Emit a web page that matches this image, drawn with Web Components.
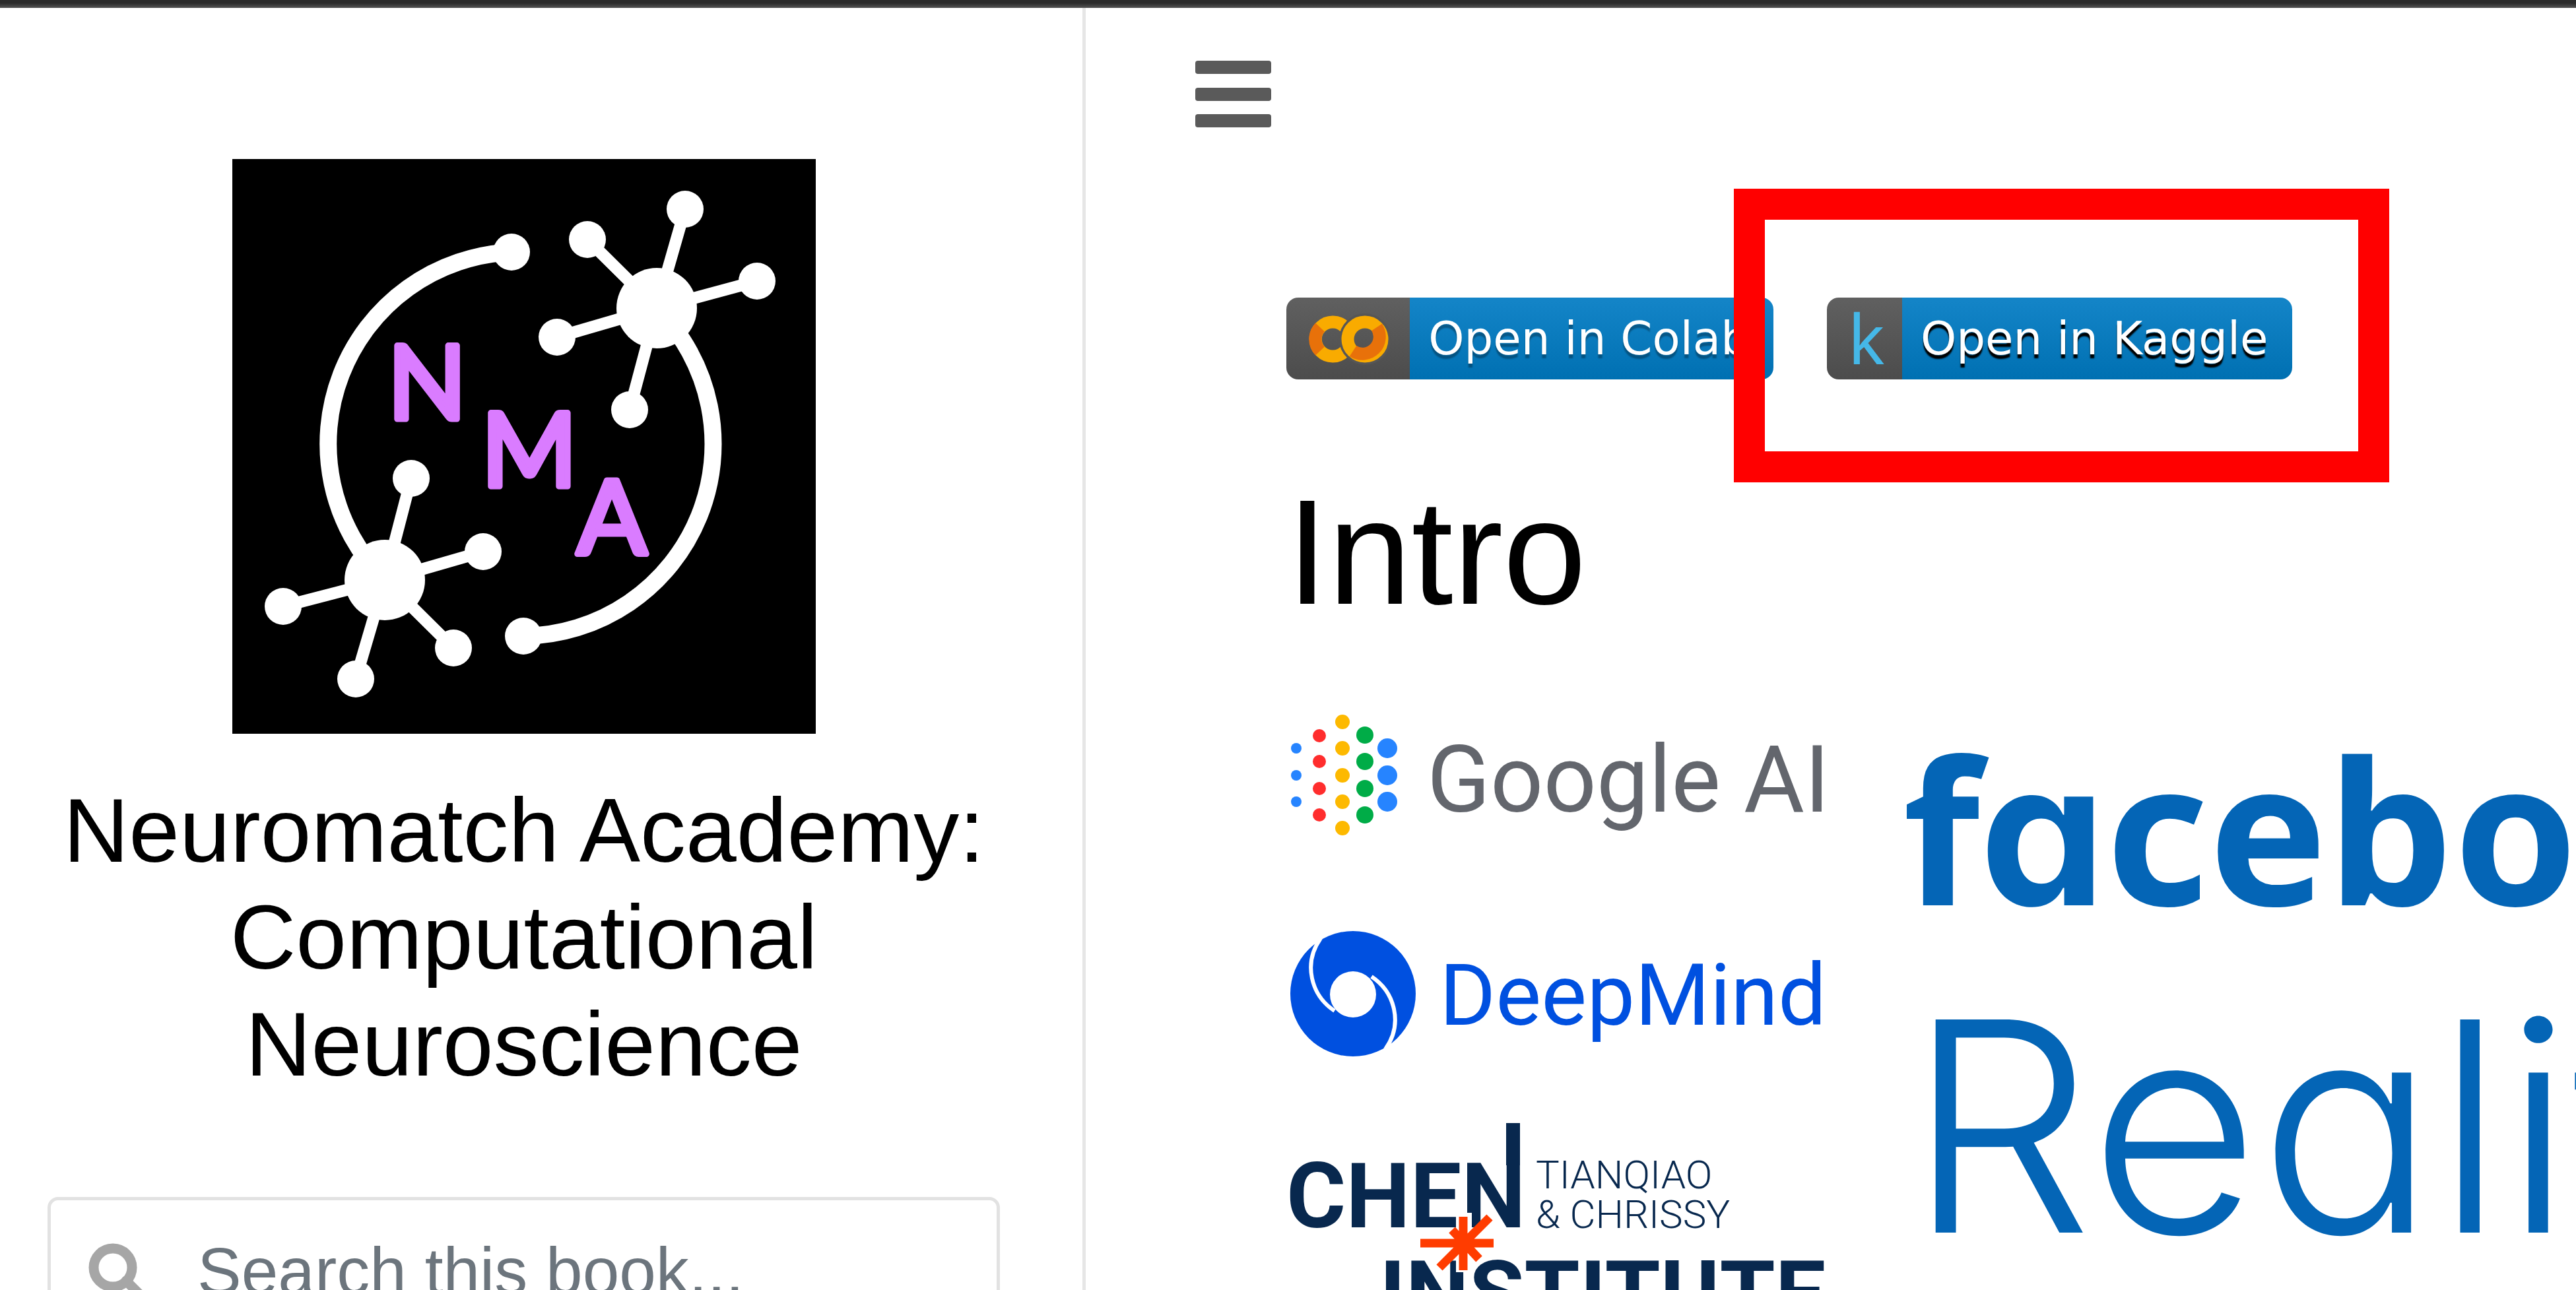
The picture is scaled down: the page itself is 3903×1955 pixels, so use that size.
<!DOCTYPE html>
<html lang="en">
<head>
<meta charset="utf-8">
<title>Intro — Neuromatch Academy: Computational Neuroscience</title>
<style>
  body {
    margin: 0;
    background: #fff;
    color: #000;
    font-family: "Liberation Sans", Arial, sans-serif;
  }
</style>
</head>
<body>
<book-page>
  <book-sidebar slot="sidebar">Neuromatch Academy: Computational Neuroscience</book-sidebar>
  <menu-toggle></menu-toggle>
  <book-article heading="Intro">
    <launch-badge slot="badges" href="#colab">
      <svg slot="icon" width="187" height="124" viewBox="1949 451 187 124" fill="none" stroke-width="19" aria-hidden="true">
        <path stroke="#f9ab00" d="M2038 496A26 26 0 1 0 2038 532"/>
        <path stroke="#e8710a" d="M2000 496A26 26 0 0 0 2000 532"/>
        <circle cx="2068" cy="514" r="36" stroke="#565656" stroke-width="6"/>
        <circle cx="2068" cy="514" r="26" stroke="#f9ab00"/>
        <path stroke="#e8710a" d="M2086 496A26 26 0 0 1 2050 532"/>
      </svg>
      Open in Colab
    </launch-badge>
    <launch-badge slot="badges" href="#kaggle" highlight>
      <svg slot="icon" width="114" height="124" viewBox="0 0 114 124" aria-hidden="true">
        <text x="32" y="101" font-family="Noto Sans, sans-serif" font-size="104" fill="#45b8e8">k</text>
      </svg>
      Open in Kaggle
    </launch-badge>
    <partner-logos></partner-logos>
  </book-article>
</book-page>

<script>
class BookPage extends HTMLElement {
  constructor() {
    super();
    this.attachShadow({ mode: 'open' }).innerHTML = `
      <style>
        :host {
          display: flex;
          flex-direction: column;
          height: 100vh;
          overflow: hidden;
        }
        .bar {
          flex: none;
          height: 12px;
          background: linear-gradient(#2b2b2b 40%, #555);
        }
        .columns {
          flex: 1;
          display: flex;
          min-height: 0;
        }
        main {
          flex: 1;
          min-width: 0;
          padding: 79px 0 0 166px;
          overflow: hidden;
        }
      </style>
      <div class="bar"></div>
      <div class="columns">
        <slot name="sidebar"></slot>
        <main><slot></slot></main>
      </div>`;
  }
}

class BookSidebar extends HTMLElement {
  constructor() {
    super();
    this.attachShadow({ mode: 'open' }).innerHTML = `
      <style>
        :host {
          display: block;
          flex: none;
          box-sizing: border-box;
          width: calc(42% + 6px);
          padding: 229px 125px 0 72px;
          border-right: 5px solid #e6e6e6;
          overflow: hidden;
          text-align: center;
        }
        .logo {
          display: block;
          width: 884px;
          margin: 0 auto;
        }
        h1 {
          margin: 65px 0 151px;
          font-size: 138px;
          line-height: 162px;
          font-weight: 400;
        }
      </style>
      <svg class="logo" viewBox="353 241 884 871" role="img" aria-label="NMA">
        <path d="M353 241h884v871H353z"/>
        <g fill="none" stroke="#fff" stroke-width="26">
          <path d="M776 382A291 291 0 0 0 584 879"/>
          <path d="M996 467A291 291 0 0 1 794 964"/>
          <path stroke-width="18" d="M996 467L1039 317M996 467L891 363M996 467L1148 426M996 467L845 511M996 467L955 621"/>
          <path stroke-width="18" d="M584 879L624 725M584 879L733 836M584 879L430 919M584 879L540 1029M584 879L688 982"/>
        </g>
        <g fill="#fff">
          <circle cx="996" cy="467" r="61"/>
          <circle cx="584" cy="879" r="61"/>
          <circle cx="776" cy="382" r="28"/>
          <circle cx="794" cy="964" r="28"/>
          <circle cx="1039" cy="317" r="28"/>
          <circle cx="891" cy="363" r="28"/>
          <circle cx="1148" cy="426" r="28"/>
          <circle cx="845" cy="511" r="28"/>
          <circle cx="955" cy="621" r="28"/>
          <circle cx="624" cy="725" r="28"/>
          <circle cx="733" cy="836" r="28"/>
          <circle cx="430" cy="919" r="28"/>
          <circle cx="540" cy="1029" r="28"/>
          <circle cx="688" cy="982" r="28"/>
        </g>
        <g fill="#da7cff" stroke="#da7cff" stroke-width="9" stroke-linejoin="round"
           font-family="Lato, sans-serif" font-size="156" text-anchor="middle">
          <text x="648" y="635">N</text>
          <text x="803" y="737">M</text>
          <text x="928" y="839">A</text>
        </g>
      </svg>
      <h1><slot></slot></h1>
      <search-box></search-box>`;
  }
}

class SearchBox extends HTMLElement {
  constructor() {
    super();
    this.attachShadow({ mode: 'open' }).innerHTML = `
      <style>
        :host { display: block; }
        label {
          display: flex;
          align-items: center;
          box-sizing: border-box;
          height: 224px;
          padding: 0 56px;
          gap: 76px;
          border: 5px solid #e2e2e2;
          border-radius: 16px;
        }
        svg { flex: none; }
        input {
          flex: 1;
          min-width: 0;
          padding: 0;
          border: 0;
          outline: 0;
          background: none;
          color: #495057;
          font: 100px "Liberation Sans", Arial, sans-serif;
        }
        input::placeholder { color: #6c757d; opacity: 1; }
      </style>
      <label>
        <svg width="90" height="90" viewBox="0 0 90 90" fill="none" stroke="#a6a6a6" stroke-width="15" aria-hidden="true">
          <circle cx="38" cy="40" r="29"/>
          <path d="M58 60L82 84" stroke-linecap="round"/>
        </svg>
        <input type="search" placeholder="Search this book..." aria-label="Search this book">
      </label>`;
  }
}

class MenuToggle extends HTMLElement {
  constructor() {
    super();
    this.attachShadow({ mode: 'open' }).innerHTML = `
      <style>
        :host { display: block; }
        button {
          display: block;
          padding: 0;
          border: 0;
          background: none;
          color: #5a5a5a;
        }
        svg { display: block; }
      </style>
      <button type="button" aria-label="Toggle navigation">
        <svg width="115" height="104" viewBox="0 0 115 104" fill="currentColor">
          <rect y="1" width="115" height="20" rx="4"/>
          <rect y="42" width="115" height="20" rx="4"/>
          <rect y="82" width="115" height="20" rx="4"/>
        </svg>
      </button>`;
  }
}

class BookArticle extends HTMLElement {
  constructor() {
    super();
    this.attachShadow({ mode: 'open' });
  }

  connectedCallback() {
    this.shadowRoot.innerHTML = `
      <style>
        :host {
          display: block;
          padding: 256px 0 0 138px;
        }
        .badges {
          display: flex;
          gap: 81px;
        }
        h1 {
          margin: 126px 0 100px;
          font-size: 227px;
          line-height: 272px;
          font-weight: 400;
        }
      </style>
      <div class="badges"><slot name="badges"></slot></div>
      <h1>${this.getAttribute('heading')}</h1>
      <slot></slot>`;
  }
}

class LaunchBadge extends HTMLElement {
  constructor() {
    super();
    this.attachShadow({ mode: 'open' });
  }

  connectedCallback() {
    this.shadowRoot.innerHTML = `
      <style>
        :host {
          display: block;
          flex: none;
          position: relative;
        }
        a {
          display: flex;
          height: 124px;
          border-radius: 18px;
          overflow: hidden;
          color: #fff;
          font: 69px "DejaVu Sans", Verdana, sans-serif;
          text-decoration: none;
        }
        .icon {
          display: flex;
          background: linear-gradient(#606060, #4c4c4c);
        }
        .label {
          display: flex;
          align-items: center;
          padding: 0 36px 0 28px;
          background: linear-gradient(#1485c8, #0070b2);
          text-shadow: 0 6px 2px rgba(1, 1, 1, 0.3);
          white-space: nowrap;
        }
        :host([highlight]) .label { text-shadow: 0 6px 2px #010101; }
        /* red marker drawn round the badge */
        :host([highlight])::after {
          content: "";
          position: absolute;
          inset: -165px -147px -156px -141px;
          border: 47px solid #f00;
          pointer-events: none;
        }
      </style>
      <a href="${this.getAttribute('href')}">
        <span class="icon"><slot name="icon"></slot></span>
        <span class="label"><slot></slot></span>
      </a>`;
  }
}

const dots = [
  [1964, 8, '#2684ff', [1134, 1175, 1215]],
  [1999, 10, '#ff2d2d', [1115, 1154, 1195, 1235]],
  [2034, 11, '#fdb900', [1094, 1134, 1175, 1215, 1255]],
  [2068, 13, '#00ac47', [1114, 1154, 1195, 1235]],
  [2102, 15, '#2684ff', [1134, 1175, 1215]],
];

class PartnerLogos extends HTMLElement {
  constructor() {
    super();
    this.attachShadow({ mode: 'open' }).innerHTML = `
      <style>
        :host {
          display: flex;
          gap: 100px;
        }
        .stack {
          flex: none;
          display: flex;
          flex-direction: column;
          gap: 90px;
        }
        svg {
          display: block;
          flex: none;
          overflow: visible;
        }
        text { font-family: Roboto, sans-serif; }
        .fb { font-family: "Noto Sans", sans-serif; }
        .round { font-family: Inter, sans-serif; font-feature-settings: "cv11"; }
      </style>
      <div class="stack">
        <svg width="820" height="220" viewBox="1949 1073 820 220" role="img" aria-label="Google AI">
          ${dots.map(([x, r, fill, ys]) => ys.map(y =>
            `<circle cx="${x}" cy="${y}" r="${r}" fill="${fill}"/>`,
          ).join('')).join('')}
          <text x="2162" y="1230" font-size="141" fill="#63666d">Google AI</text>
        </svg>
        <svg width="820" height="220" viewBox="1949 1383 820 220" role="img" aria-label="DeepMind">
          <circle cx="2050" cy="1506" r="95" fill="#0050e0"/>
          <circle cx="2050" cy="1507" r="35" fill="#fff"/>
          <path fill="none" stroke="#fff" stroke-width="6" d="M2001 1422C1974 1460 1986 1508 2022 1532M2099 1590C2126 1552 2114 1504 2078 1480"/>
          <text x="2181" y="1553" font-size="130" fill="#0050e0">DeepMind</text>
        </svg>
        <svg width="820" height="340" viewBox="1949 1693 820 340" role="img" aria-label="Tianqiao and Chrissy Chen Institute">
          <g fill="#08284e">
            <text x="1949" y="1860" font-size="138" font-weight="700">CHEN</text>
            <path d="M2282 1702h21v64h-21z"/>
            <text x="2327" y="1801" font-size="60" font-weight="300">TIANQIAO</text>
            <text x="2327" y="1861" font-size="60" font-weight="300">&amp; CHRISSY</text>
            <text x="2090" y="2007" font-size="136" font-weight="700">INSTITUTE</text>
          </g>
          <path fill="#fff" d="M2206 1838h24v90h-24z"/>
          <path stroke="#ff3c00" stroke-width="13" d="M2152 1884H2263M2217 1844V1925M2257 1845L2181 1921M2200 1864L2241 1908"/>
        </svg>
      </div>
      <svg width="1034" height="882" viewBox="2869 1073 1034 882" fill="#0465b6" role="img" aria-label="facebook Reality">
        <text class="fb" x="2883" y="1372" font-size="302" font-weight="700">f<tspan class="round">a</tspan>cebook</text>
        <text class="round" x="2890" y="1868" font-size="444" font-weight="300">Reality</text>
      </svg>`;
  }
}

customElements.define('book-page', BookPage);
customElements.define('search-box', SearchBox);
customElements.define('book-sidebar', BookSidebar);
customElements.define('menu-toggle', MenuToggle);
customElements.define('book-article', BookArticle);
customElements.define('launch-badge', LaunchBadge);
customElements.define('partner-logos', PartnerLogos);
</script>
</body>
</html>
